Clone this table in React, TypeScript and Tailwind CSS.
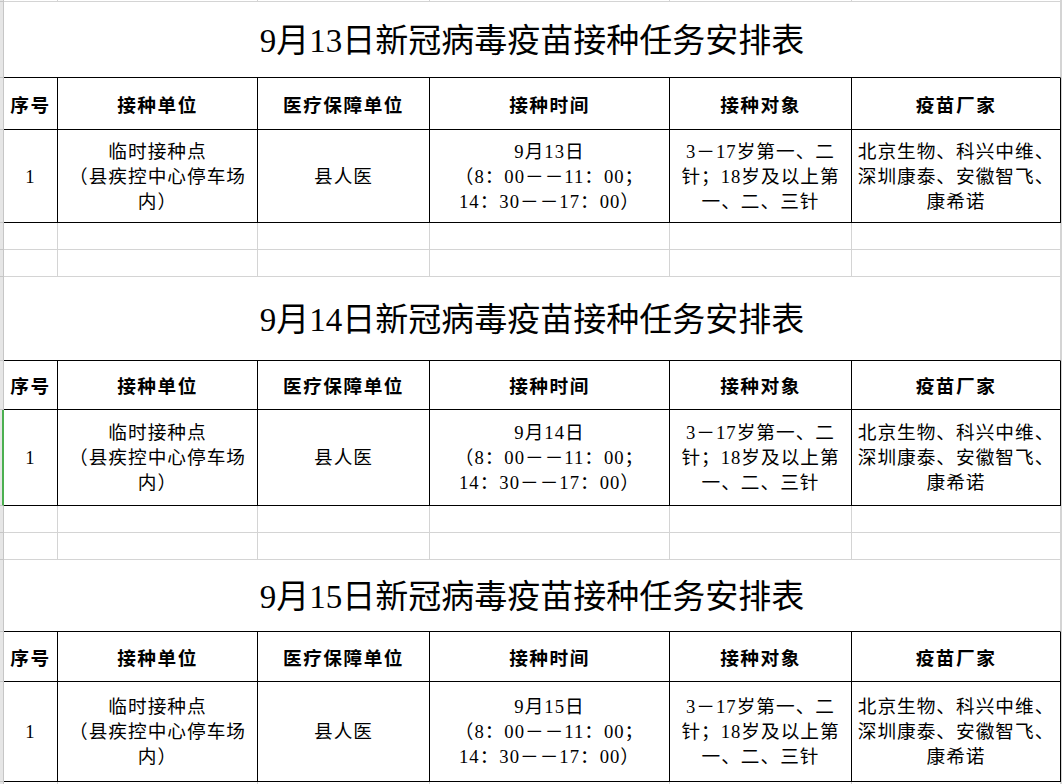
const COLS = ["w-[54px]", "w-[200px]", "w-[172px]", "w-[240px]", "w-[182px]", "w-[209px]"]
const GRID = "border-[#d4d4d4]"
const SERIF = "font-['Liberation_Serif','Noto_Sans_CJK_SC',serif]"

type Block = {
  date: string
  titleH: string
  headH: string
  dataH: string
  green?: boolean
}

const blocks: Block[] = [
  { date: "13", titleH: "h-[76px]", headH: "h-[52px]", dataH: "h-[93px]" },
  { date: "14", titleH: "h-[84px]", headH: "h-[49px]", dataH: "h-[96px]", green: true },
  { date: "15", titleH: "h-[72px]", headH: "h-[50px]", dataH: "h-[100px]" },
]

const headers = ["序号", "接种单位", "医疗保障单位", "接种时间", "接种对象", "疫苗厂家"]

function Row({ h, green, children }: { h: string; green?: boolean; children: React.ReactNode }) {
  return (
    <div className={`flex shrink-0 ${h}`}>
      <div
        className={
          green
            ? "w-[4px] shrink-0 border-r-2 border-b border-r-[#4caf50] border-b-[#c6c6c6] bg-[#e6e6e6]"
            : "w-[4px] shrink-0 border-r border-b border-[#c6c6c6] bg-[#e6e6e6]"
        }
      />
      {children}
      <div className={`flex-1 border-l ${GRID}`} />
    </div>
  )
}

function EmptyRow({ h }: { h: string }) {
  return (
    <Row h={h}>
      {COLS.map((w) => (
        <div key={w} className={`${w} shrink-0 border-r border-b ${GRID}`} />
      ))}
    </Row>
  )
}

function Lines({ lines }: { lines: string[] }) {
  return (
    <div className="flex flex-col items-center">
      {lines.map((l) => (
        <span key={l} className="whitespace-nowrap">
          {l}
        </span>
      ))}
    </div>
  )
}

function Table({ b }: { b: Block }) {
  const cells = [
    ["1"],
    ["临时接种点", "（县疾控中心停车场", "内）"],
    ["县人医"],
    [`9月${b.date}日`, "（8：00－－11：00；", "14：30－－17：00）"],
    ["3－17岁第一、二", "针；18岁及以上第", "一、二、三针"],
    ["北京生物、科兴中维、", "深圳康泰、安徽智飞、", "康希诺"],
  ]
  return (
    <>
      <Row h={b.titleH}>
        <div
          className={`flex w-[1057px] shrink-0 items-center justify-center border-r border-b border-r-[#d4d4d4] border-b-black pt-[5px] text-[33px] text-black ${SERIF}`}
        >
          {`9月${b.date}日新冠病毒疫苗接种任务安排表`}
        </div>
      </Row>
      <Row h={b.headH}>
        {headers.map((t, i) => (
          <div
            key={t}
            className={`${COLS[i]} flex shrink-0 items-center justify-center border-r border-b border-black text-[18.67px] font-bold tracking-[1.5px] text-black font-['Noto_Sans_CJK_SC',sans-serif]`}
          >
            {t}
          </div>
        ))}
      </Row>
      <Row h={b.dataH} green={b.green}>
        {cells.map((lines, i) => (
          <div
            key={i}
            className={`${COLS[i]} flex shrink-0 items-center justify-center border-r border-b border-black text-[18.67px] leading-[25px] tracking-[1px] text-black ${SERIF}`}
          >
            <Lines lines={lines} />
          </div>
        ))}
      </Row>
      <EmptyRow h="h-[27px]" />
      <EmptyRow h="h-[27px]" />
    </>
  )
}

export default function App() {
  return (
    <div className="flex h-[784px] w-[1063px] flex-col overflow-hidden bg-white">
      <EmptyRow h="h-[2px]" />
      {blocks.map((b) => (
        <Table key={b.date} b={b} />
      ))}
    </div>
  )
}
